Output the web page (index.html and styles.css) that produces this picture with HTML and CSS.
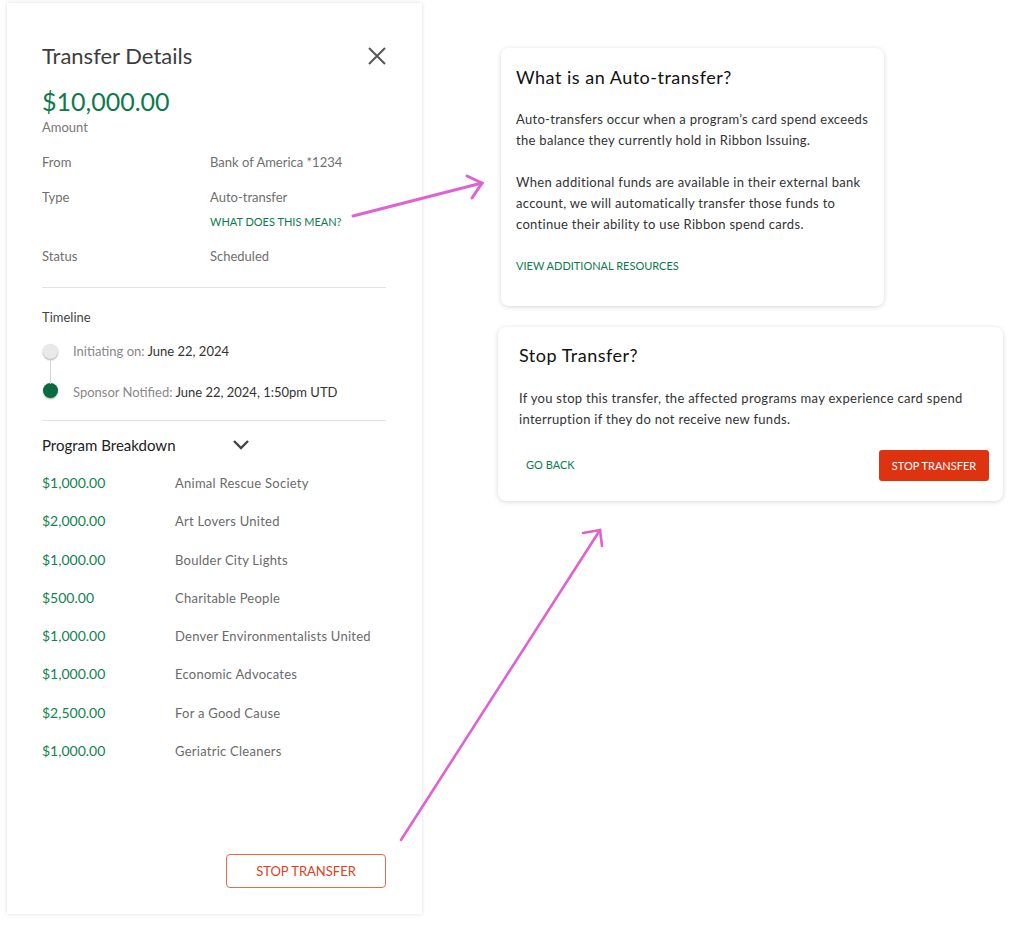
FILE: index.html
```html
<!DOCTYPE html>
<html lang="en">

<head>
    <meta charset="UTF-8">
    <meta name="viewport" content="width=device-width, initial-scale=1.0">
    <title>Transfer Details</title>
    <link rel="stylesheet" href="styles.css">
</head>

<body>
    <div class="board">
        <div class="panel">
            <div class="panel-header">
                <h1>Transfer Details</h1>
                <button class="close-btn" aria-label="Close">
                    <svg width="20" height="20" viewBox="0 0 20 20">
                        <path d="M2 2 L18 18 M18 2 L2 18" stroke="#555" stroke-width="2" fill="none" />
                    </svg>
                </button>
            </div>
            <div class="amount">$10,000.00</div>
            <div class="amount-label">Amount</div>

            <div class="info-row">
                <span class="label">From</span>
                <span class="value">Bank of America *1234</span>
            </div>
            <div class="info-row">
                <span class="label">Type</span>
                <div class="value">
                    Auto-transfer
                    <a class="link" href="#">What does this mean?</a>
                </div>
            </div>
            <div class="info-row">
                <span class="label">Status</span>
                <span class="value">Scheduled</span>
            </div>

            <hr class="divider divider-first">

            <div class="section-title">Timeline</div>
            <ul class="timeline">
                <li class="step">
                    <span class="dot"></span>
                    <span class="step-text">Initiating on: <b>June 22, 2024</b></span>
                </li>
                <li class="step done">
                    <span class="dot"></span>
                    <span class="step-text">Sponsor Notified: <b>June 22, 2024, 1:50pm UTD</b></span>
                </li>
            </ul>

            <hr class="divider divider-second">

            <div class="breakdown-header">
                <span>Program Breakdown</span>
                <svg width="18" height="12" viewBox="0 0 18 12">
                    <path d="M2 2 L9 9 L16 2" stroke="#444" stroke-width="2.4" fill="none" />
                </svg>
            </div>
            <div class="breakdown">
                <span class="money">$1,000.00</span><span class="program">Animal Rescue Society</span>
                <span class="money">$2,000.00</span><span class="program">Art Lovers United</span>
                <span class="money">$1,000.00</span><span class="program">Boulder City Lights</span>
                <span class="money">$500.00</span><span class="program">Charitable People</span>
                <span class="money">$1,000.00</span><span class="program">Denver Environmentalists United</span>
                <span class="money">$1,000.00</span><span class="program">Economic Advocates</span>
                <span class="money">$2,500.00</span><span class="program">For a Good Cause</span>
                <span class="money">$1,000.00</span><span class="program">Geriatric Cleaners</span>
            </div>

            <button class="outline-btn">STOP TRANSFER</button>
        </div>

        <div class="cards">
            <div class="card card-info">
                <h2>What is an Auto-transfer?</h2>
                <p>Auto-transfers occur when a program’s card spend exceeds<br>the balance they currently hold in Ribbon Issuing.</p>
                <p>When additional funds are available in their external bank<br>account, we will automatically transfer those funds to<br>continue their ability to use Ribbon spend cards.</p>
                <a class="link" href="#">View additional resources</a>
            </div>

            <div class="card card-confirm">
                <h2>Stop Transfer?</h2>
                <p>If you stop this transfer, the affected programs may experience card spend<br>interruption if they do not receive new funds.</p>
                <div class="card-actions">
                    <button class="text-btn">GO BACK</button>
                    <button class="solid-btn">STOP TRANSFER</button>
                </div>
            </div>
        </div>

        <!-- callout arrows linking the panel to the dialogs -->
        <svg class="callouts" width="1024" height="940" viewBox="0 0 1024 940">
            <g stroke="#e062d2" stroke-width="3" stroke-linecap="round" fill="none">
                <path d="M353 216 L482 183" />
                <path d="M467 176 L482 183 L472 198" />
            </g>
            <g stroke="#e062d2" stroke-width="2.6" stroke-linecap="round" fill="none">
                <path d="M401 840 L600 530" />
                <path d="M583 533 L600 530 L602 546" />
            </g>
        </svg>
    </div>
</body>

</html>
```

FILE: styles.css
```css
html,
body {
    margin: 0;
    background: #fff;
    font-family: 'Lato', 'Open Sans', sans-serif;
    color: #444;
}

.board {
    position: relative;
    display: flex;
    align-items: flex-start;
    width: 1024px;
    height: 940px;
}

/* left side sheet */
.panel {
    box-sizing: border-box;
    display: flex;
    flex-direction: column;
    width: 415px;
    height: 911px;
    margin: 3px 0 0 7px;
    padding: 39px 36px 26px 35px;
    background: #fff;
    box-shadow: 0 0 4px rgba(0, 0, 0, 0.14);
}

.panel-header {
    display: flex;
    justify-content: space-between;
    align-items: center;
}

.panel-header h1 {
    margin: 0;
    font-size: 22px;
    line-height: 28px;
    font-weight: 400;
    color: #3d3d3d;
}

.close-btn {
    display: flex;
    padding: 0;
    margin-right: -1px;
    border: none;
    background: none;
    cursor: pointer;
}

.amount {
    margin-top: 15px;
    font-size: 25px;
    line-height: 32px;
    color: #0c7a4d;
}

.amount-label {
    margin-top: 1px;
    font-size: 13px;
    line-height: 18px;
    color: #777;
}

.info-row {
    display: flex;
    margin-top: 17px;
    font-size: 13px;
    line-height: 18px;
    color: #6f6f6f;
}

.info-row:first-of-type {
    margin-top: 16px;
}

.info-row .label {
    width: 168px;
    flex-shrink: 0;
}

.info-row .value {
    display: flex;
    flex-direction: column;
    gap: 8px;
}

.link {
    font-size: 11px;
    line-height: 16px;
    color: #0c7a4d;
    text-decoration: none;
    text-transform: uppercase;
}

.divider {
    width: 100%;
    margin: 0;
    border: none;
    border-top: 1px solid #e3e3e3;
}

.divider-first {
    margin-top: 22px;
}

.section-title {
    margin-top: 20px;
    font-size: 13px;
    line-height: 18px;
    color: #444;
}

.timeline {
    list-style: none;
    margin: 16px 0 0;
    padding: 0;
}

.step {
    position: relative;
    display: flex;
    align-items: center;
    gap: 15px;
    font-size: 13px;
    line-height: 18px;
    color: #888;
}

.step + .step {
    margin-top: 23px;
}

.step b {
    font-weight: 400;
    color: #333;
}

.dot {
    width: 15px;
    height: 15px;
    margin-left: 1px;
    border-radius: 50%;
    background: #e9e9e9;
    box-shadow: 0 1px 2px rgba(0, 0, 0, 0.35);
    flex-shrink: 0;
}

.step.done .dot {
    background: #0a6b43;
    margin-top: -4px;
}

/* connector between the two steps */
.step + .step::before {
    content: '';
    position: absolute;
    left: 8px;
    top: -25px;
    height: 26px;
    border-left: 1px solid #d6d6d6;
}

.divider-second {
    margin-top: 19px;
}

.breakdown-header {
    display: flex;
    justify-content: space-between;
    align-items: center;
    width: 208px;
    margin-top: 14px;
    font-size: 15px;
    line-height: 20px;
    color: #222;
}

.breakdown {
    display: grid;
    grid-template-columns: 133px 1fr;
    row-gap: 20.3px;
    margin-top: 19px;
    line-height: 18px;
}

.money {
    font-size: 14px;
    color: #12824f;
}

.program {
    font-size: 13px;
    color: #6a6a6a;
    letter-spacing: 0.25px;
}

.outline-btn {
    align-self: flex-end;
    width: 160px;
    height: 34px;
    margin-top: auto;
    border: 1px solid #e66a48;
    border-radius: 4px;
    background: #fff;
    color: #e0401b;
    font-family: inherit;
    font-size: 13px;
    cursor: pointer;
}

/* right column dialogs */
.cards {
    display: flex;
    flex-direction: column;
    margin-left: 76px;
}

.card {
    box-sizing: border-box;
    background: #fff;
    border-radius: 8px;
    box-shadow: 0 1px 5px rgba(0, 0, 0, 0.16);
}

.card h2 {
    margin: 0;
    font-size: 18px;
    line-height: 24px;
    font-weight: 400;
    color: #111;
    letter-spacing: 0.5px;
}

.card p {
    margin: 0;
    font-size: 13px;
    line-height: 21px;
    color: #333;
    letter-spacing: 0.3px;
    white-space: nowrap;
}

.card-info {
    width: 383px;
    height: 258px;
    margin: 48px 0 0 3px;
    padding: 17px 15px 0;
}

.card-info h2 + p {
    margin-top: 20px;
}

.card-info p + p {
    margin-top: 21px;
}

.card-info .link {
    display: block;
    margin-top: 23px;
}

.card-confirm {
    width: 505px;
    margin-top: 21px;
    padding: 16px 14px 20px 21px;
}

.card-confirm h2 + p {
    margin-top: 21px;
}

.card-actions {
    display: flex;
    justify-content: space-between;
    align-items: center;
    margin-top: 20px;
}

.text-btn {
    padding: 0 7px 3px;
    border: none;
    background: none;
    color: #0c7a4d;
    font-family: inherit;
    font-size: 11px;
    cursor: pointer;
}

.solid-btn {
    width: 110px;
    height: 31px;
    border: none;
    border-radius: 3px;
    background: #dd3310;
    color: #fff;
    font-family: inherit;
    font-size: 11px;
    cursor: pointer;
}

.callouts {
    position: absolute;
    left: 0;
    top: 0;
    pointer-events: none;
}
```
